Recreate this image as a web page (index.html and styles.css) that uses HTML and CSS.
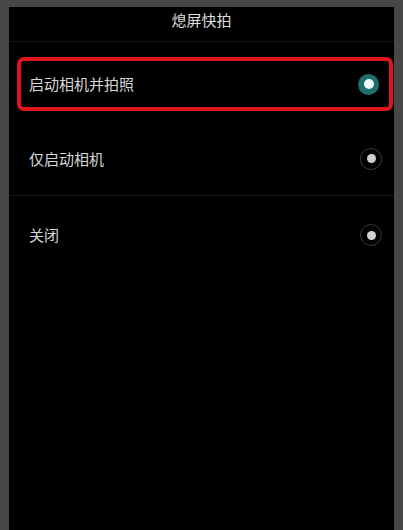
FILE: index.html
```html
<!DOCTYPE html>
<html lang="zh">
<head>
<meta charset="utf-8">
<link rel="stylesheet" href="styles.css">
</head>
<body>
<div class="panel">
  <div class="title">熄屏快拍</div>
  <div class="list">
    <div class="row selected">
      <span class="label">启动相机并拍照</span>
      <span class="radio on"></span>
    </div>
    <div class="row plain first">
      <span class="label">仅启动相机</span>
      <span class="radio"></span>
    </div>
    <div class="row plain">
      <span class="label">关闭</span>
      <span class="radio"></span>
    </div>
  </div>
</div>
</body>
</html>
```

FILE: styles.css
```css
html, body {
  margin: 0;
  padding: 0;
  height: 100%;
}
body {
  background: #474747;
  font-family: "Noto Sans CJK SC", "Noto Sans", sans-serif;
  overflow: hidden;
}
.panel {
  margin: 7px 9px 0 9px;
  height: 523px;
  background: #000;
  display: flex;
  flex-direction: column;
}
.title {
  height: 35px;
  box-sizing: border-box;
  padding-top: 3px;
  line-height: 20px;
  text-align: center;
  color: #dedede;
  font-size: 15px;
  border-bottom: 1px solid #141414;
}
.list {
  display: flex;
  flex-direction: column;
  padding: 15px 0 0 0;
}
.row {
  display: flex;
  align-items: center;
  justify-content: space-between;
  box-sizing: border-box;
}
.label {
  color: #d6d6d6;
  font-size: 15px;
  line-height: 20px;
}
.selected {
  height: 54px;
  margin: 0 1px 0 8px;
  border: 4px solid #e0141c;
  border-radius: 7px;
  padding: 0 10px 0 8px;
}
.plain {
  height: 76px;
  padding: 2px 12px 0 20px;
}
.plain.first {
  margin-top: 9px;
  border-bottom: 1px solid #161616;
}
.radio {
  width: 22px;
  height: 22px;
  box-sizing: border-box;
  border-radius: 50%;
  border: 1.5px solid #3a3a3a;
  display: flex;
  align-items: center;
  justify-content: center;
}
.radio::after {
  content: "";
  width: 9px;
  height: 9px;
  border-radius: 50%;
  background: #d0d0d0;
}
.radio.on {
  width: 21px;
  height: 21px;
  border: none;
  background: #1e6e6b;
}
.radio.on::after {
  width: 10px;
  height: 10px;
  background: #f2f8f8;
}
```
